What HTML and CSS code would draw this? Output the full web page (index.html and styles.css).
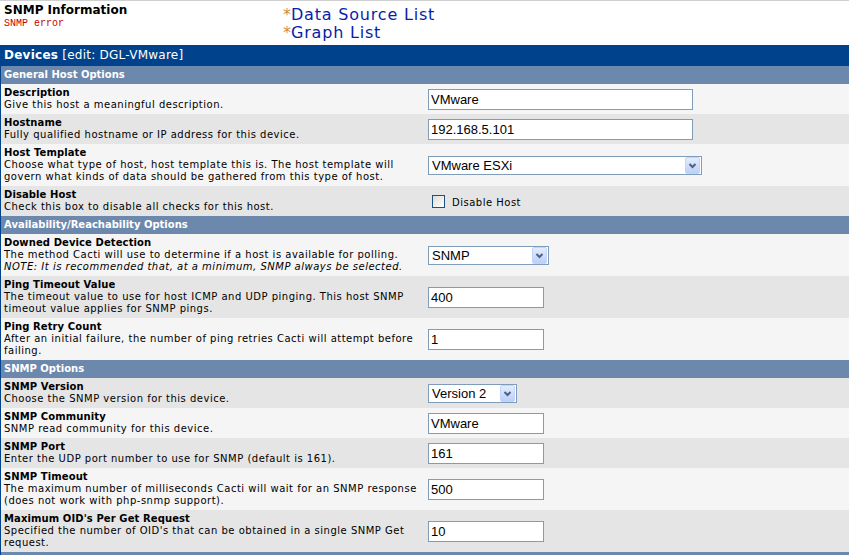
FILE: index.html
```html
<!DOCTYPE html>
<html>
<head>
<meta charset="utf-8">
<title>Devices - edit</title>
<link rel="stylesheet" href="styles.css">
</head>
<body>
<div class="top">
  <div class="info">
    <div class="info-title">SNMP Information</div>
    <div class="info-err">SNMP error</div>
  </div>
  <div class="links">
    <div class="link-line"><span class="star">*</span><a href="#">Data Source List</a></div>
    <div class="link-line"><span class="star">*</span><a href="#">Graph List</a></div>
  </div>
</div>
<div class="panel">
  <div class="panel-title"><b>Devices</b> [edit: DGL-VMware]</div>

  <div class="section">General Host Options</div>
  <div class="row l">
    <div class="text"><div class="label">Description</div><div class="desc">Give this host a meaningful description.</div></div>
    <div class="field"><input class="input wide" type="text" value="VMware" readonly></div>
  </div>
  <div class="row d">
    <div class="text"><div class="label">Hostname</div><div class="desc">Fully qualified hostname or IP address for this device.</div></div>
    <div class="field"><input class="input wide" type="text" value="192.168.5.101" readonly></div>
  </div>
  <div class="row l">
    <div class="text"><div class="label">Host Template</div><div class="desc">Choose what type of host, host template this is. The host template will<br>govern what kinds of data should be gathered from this type of host.</div></div>
    <div class="field"><div class="select s-template"><span class="select-text">VMware ESXi</span><span class="select-btn"><svg width="13" height="15" viewBox="0 0 13 15"><path d="M3.5 6 L6.5 9 L9.5 6" fill="none" stroke="#4d6185" stroke-width="2"/></svg></span></div></div>
  </div>
  <div class="row d">
    <div class="text"><div class="label">Disable Host</div><div class="desc">Check this box to disable all checks for this host.</div></div>
    <div class="field"><input class="checkbox" type="checkbox"><span class="check-label">Disable Host</span></div>
  </div>

  <div class="section">Availability/Reachability Options</div>
  <div class="row l">
    <div class="text"><div class="label">Downed Device Detection</div><div class="desc">The method Cacti will use to determine if a host is available for polling.<br><i>NOTE: It is recommended that, at a minimum, SNMP always be selected.</i></div></div>
    <div class="field"><div class="select s-snmp"><span class="select-text">SNMP</span><span class="select-btn"><svg width="13" height="15" viewBox="0 0 13 15"><path d="M3.5 6 L6.5 9 L9.5 6" fill="none" stroke="#4d6185" stroke-width="2"/></svg></span></div></div>
  </div>
  <div class="row d">
    <div class="text"><div class="label">Ping Timeout Value</div><div class="desc">The timeout value to use for host ICMP and UDP pinging. This host SNMP<br>timeout value applies for SNMP pings.</div></div>
    <div class="field"><input class="input narrow" type="text" value="400" readonly></div>
  </div>
  <div class="row l">
    <div class="text"><div class="label">Ping Retry Count</div><div class="desc">After an initial failure, the number of ping retries Cacti will attempt before<br>failing.</div></div>
    <div class="field"><input class="input narrow" type="text" value="1" readonly></div>
  </div>

  <div class="section">SNMP Options</div>
  <div class="row d">
    <div class="text"><div class="label">SNMP Version</div><div class="desc">Choose the SNMP version for this device.</div></div>
    <div class="field"><div class="select s-version"><span class="select-text">Version 2</span><span class="select-btn"><svg width="13" height="15" viewBox="0 0 13 15"><path d="M3.5 6 L6.5 9 L9.5 6" fill="none" stroke="#4d6185" stroke-width="2"/></svg></span></div></div>
  </div>
  <div class="row l">
    <div class="text"><div class="label">SNMP Community</div><div class="desc">SNMP read community for this device.</div></div>
    <div class="field"><input class="input narrow" type="text" value="VMware" readonly></div>
  </div>
  <div class="row d">
    <div class="text"><div class="label">SNMP Port</div><div class="desc">Enter the UDP port number to use for SNMP (default is 161).</div></div>
    <div class="field"><input class="input narrow" type="text" value="161" readonly></div>
  </div>
  <div class="row l">
    <div class="text"><div class="label">SNMP Timeout</div><div class="desc">The maximum number of milliseconds Cacti will wait for an SNMP response<br>(does not work with php-snmp support).</div></div>
    <div class="field"><input class="input narrow" type="text" value="500" readonly></div>
  </div>
  <div class="row d">
    <div class="text"><div class="label">Maximum OID's Per Get Request</div><div class="desc">Specified the number of OID's that can be obtained in a single SNMP Get<br>request.</div></div>
    <div class="field"><input class="input narrow" type="text" value="10" readonly></div>
  </div>
  <div class="section end"></div>
</div>
</body>
</html>
```
FILE: styles.css
```css
* { box-sizing: border-box; }

html, body {
  margin: 0;
  padding: 0;
}

body {
  width: 849px;
  height: 555px;
  overflow: hidden;
  background: #ffffff;
  font-family: "DejaVu Sans", Verdana, sans-serif;
  color: #000000;
}

.top {
  display: flex;
  height: 45px;
  border-top: 1px solid #cfcfcf;
}

.info {
  width: 283px;
  padding: 2px 0 0 4px;
}

.info-title {
  font-size: 12px;
  line-height: 14px;
  font-weight: bold;
}

.info-err {
  font-family: "Liberation Mono", monospace;
  font-size: 10px;
  line-height: 11px;
  color: #cc0000;
  margin-top: 1px;
}

.links {
  padding-top: 5px;
  font-size: 16px;
  letter-spacing: 0.8px;
}

.link-line {
  height: 17px;
  line-height: 17px;
}

.link-line + .link-line {
  margin-top: 1px;
}

.star {
  color: #d08a4a;
  letter-spacing: 0;
}

.links a {
  color: #0a1ea8;
  text-decoration: none;
}

.panel {
  border-left: 1px solid #00438c;
}

.panel-title {
  height: 21px;
  line-height: 21px;
  padding-left: 3px;
  background: #00438c;
  color: #ffffff;
  font-size: 12px;
  letter-spacing: 0.25px;
}

.section {
  height: 18px;
  line-height: 18px;
  padding-left: 3px;
  background: #6d88ad;
  color: #ffffff;
  font-size: 10px;
  font-weight: bold;
}

.section.end {
  height: 3px;
}

.row {
  display: grid;
  grid-template-columns: 424px 1fr;
}

.row.l { background: #f5f5f5; }
.row.d { background: #e5e5e5; }

.text {
  padding: 3px 0 3px 3px;
  font-size: 10px;
  line-height: 12px;
}

.label {
  font-weight: bold;
  letter-spacing: 0.1px;
}

.desc {
  letter-spacing: 0.5px;
  white-space: nowrap;
}

.field {
  display: flex;
  align-items: center;
  padding-left: 3px;
}

.input {
  height: 21px;
  margin: 0;
  padding: 0 2px;
  border: 1px solid #7f9db9;
  background: #ffffff;
  font-family: "Liberation Sans", Arial, sans-serif;
  font-size: 13px;
  color: #000000;
  outline: none;
}

.input.wide { width: 265px; }
.input.narrow { width: 116px; }

.select {
  display: flex;
  align-items: center;
  height: 19px;
  border: 1px solid #7f9db9;
  background: #ffffff;
  font-family: "Liberation Sans", Arial, sans-serif;
  font-size: 13px;
}

.s-template { width: 274px; }
.s-snmp { width: 121px; }
.s-version { width: 89px; }

.select-text {
  flex: 1;
  padding-left: 3px;
  line-height: 17px;
}

.select-btn {
  display: block;
  width: 15px;
  height: 17px;
  margin-right: 1px;
  border: 1px solid #c3d3fd;
  border-radius: 2px;
  background: linear-gradient(#e4ecfe, #bccff7);
}

.select-btn svg {
  display: block;
}

.checkbox {
  appearance: none;
  -webkit-appearance: none;
  width: 13px;
  height: 13px;
  margin: 0 0 0 4px;
  border: 1px solid #1c5180;
  background: linear-gradient(135deg, #dcdcd7, #ffffff);
}

.check-label {
  margin-left: 7px;
  font-size: 10px;
  letter-spacing: 0.5px;
  padding-top: 3px;
}
```
